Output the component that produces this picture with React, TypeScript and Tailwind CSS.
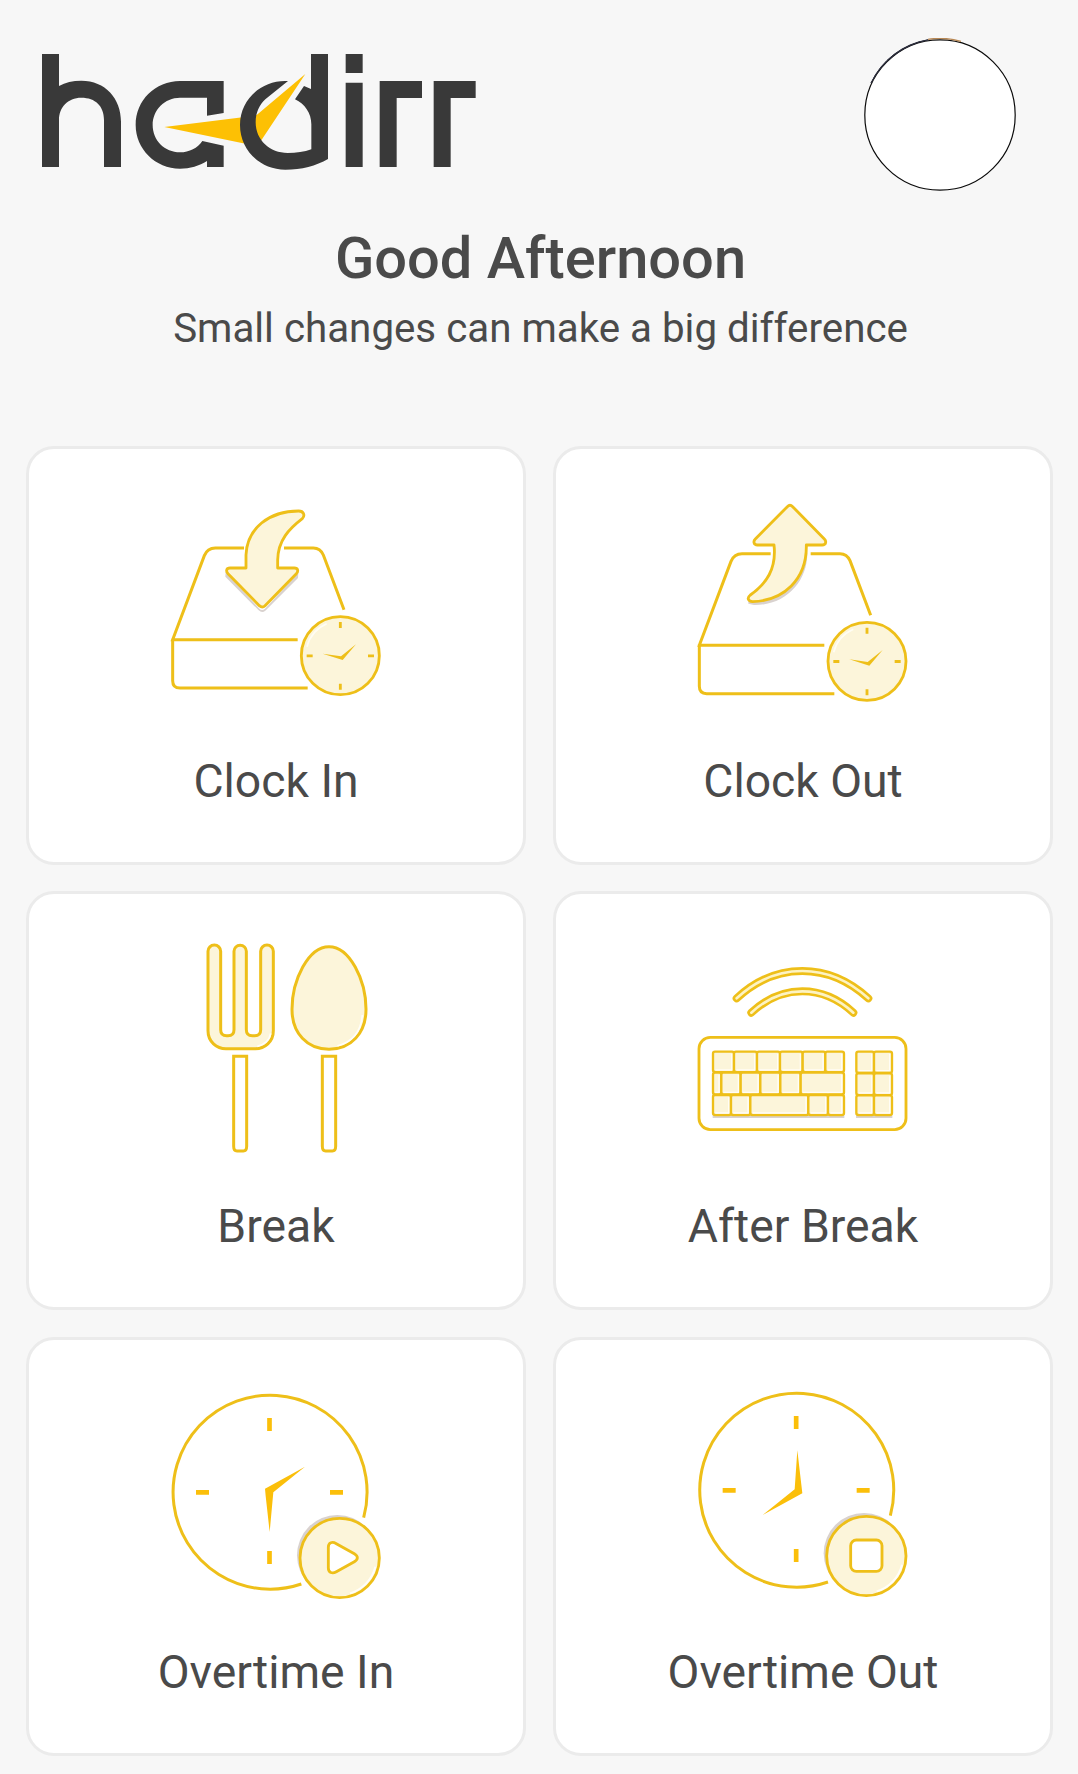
import type { ReactNode } from 'react'

const GOLD = '#eebf19'
const AMBER = '#fbbf0a'
const CREAM = '#fcf5da'
const SHADE = '#d9d2cf'

function Logo() {
  return (
    <svg className="h-40 w-[480px]" viewBox="0 0 1440 480" role="img" aria-label="hadirr">
      {/* h */}
      <path d="M66 72H117V168C136 157 158 152 184 152C256 152 303 205 303 275V411H252V270C252 228 226 203 184 203C143 203 117 232 117 270V411H66Z" fill="#393939" />
      {/* a */}
      <path d="M611 153V249L561 257V203H480C434 203 398 240 398 285C398 331 434 367 480 367C508 367 533 354 547 333L611 347V411H561V393C538 408 510 416 480 416C406 416 347 357 347 285C347 211 406 153 480 153Z" fill="#393939" />
      {/* clock hands */}
      <path d="M433 291L668 262L710 255L856 132L722 334L680 342Z" fill="#fdc004" />
      {/* d */}
      <path d="M804 153C728 148 660 206 660 285C660 360 720 419 796 419C845 419 888 408 924 387V72H873V177L852 168L825 208C855 222 874 250 874 283V358C853 366 829 369 803 369C750 369 707 331 707 277C707 249 717 226 736 208Z" fill="#393939" />
      {/* i, r, r */}
      <path d="M977 72H1028V129H977ZM977 158H1028V411H977ZM1079 153H1206V204H1130V411H1079ZM1241 153H1367V204H1292V411H1241Z" fill="#393939" />
    </svg>
  )
}

function Avatar() {
  return (
    <svg className="size-[154px]" viewBox="0 0 154 154" role="img" aria-label="Profile">
      <circle cx="77" cy="77" r="75.2" fill="#fff" stroke="#0a0a0a" strokeWidth="1.2" />
      <path d="M8 45A76 76 0 0 1 65 1.800A82 82 0 0 0 8 45Z" fill="#1b1c2b" stroke="#2b2d3c" strokeWidth="1" />
      <path d="M65 1.300A76 76 0 0 1 98 3.300" fill="none" stroke="#b98956" strokeWidth="1.200" />
    </svg>
  )
}

function SmallClock() {
  return (
    <>
      <circle cx="571" cy="497" r="117" fill={CREAM} stroke={GOLD} strokeWidth="8.500" />
      <path d="M471 470A104 104 0 0 1 530 401" fill="none" stroke="#fffdf4" strokeWidth="5" />
      <path d="M571 396V414M571 581V599M470 497.500H488M654 497.500H672" stroke={GOLD} strokeWidth="8.500" />
      <path d="M518 491L573 499L618 463L578 510Z" fill={GOLD} />
    </>
  )
}

function TrayLines() {
  return (
    <path d="M282 174H196Q172 174 163 197L68 449H443M68 446V572Q68 594 90 594H473M402 174H490Q511 174 520 195L582 359" fill="none" stroke={GOLD} strokeWidth="9" />
  )
}

function ClockInIcon() {
  return (
    <svg className="size-[250px]" viewBox="3 -45 750 750" aria-hidden>
      <TrayLines />
      <path d="M227 246L328 356Q336 364 345 356L445 249L444 264L346 362Q336 370 326 361L226 260Z" fill={SHADE} />
      <path d="M288 234V195C291 115 357 63 446 63C461 63 466 76 457 86C418 116 384 150 383 210V234H433C444 234 446 243 439 251L345 347Q337 355 328 347L234 251C227 243 229 234 240 234Z" fill={CREAM} stroke={GOLD} strokeWidth="8.500" strokeLinejoin="round" />
      <SmallClock />
    </svg>
  )
}

function ClockOutIcon() {
  return (
    <svg className="size-[250px]" viewBox="-6 -45 750 750" aria-hidden>
      <g transform="translate(-10 17)">
        <TrayLines />
        <SmallClock />
      </g>
      <path d="M382 190C382 276 316 347 222 345L205 341V326L230 335C310 332 377 270 380 190Z" fill={SHADE} />
      <path d="M282 165C290 237 259 281 211 315C200 324 204 334 218 335C310 332 381 269 379 165H427C438 165 440 154 433 147L338 50Q330 42 322 50L226 147C219 154 221 165 232 165Z" fill={CREAM} stroke={GOLD} strokeWidth="8.500" strokeLinejoin="round" />
    </svg>
  )
}

function BreakIcon() {
  return (
    <svg className="size-[250px]" viewBox="-87 0 750 750" aria-hidden>
      <g stroke={GOLD} strokeWidth="9">
        <path d="M84 94A19 19 0 0 1 122 94V329Q122 347 140 347H144Q162 347 162 329V94A18.500 18.500 0 0 1 199 94V329Q199 347 217 347H224Q242 347 242 329V94A19 19 0 0 1 280 94V332C280 365 254 386 226 386H138C110 386 84 365 84 332Z" fill={CREAM} />
        <path d="M447 80C385 80 336 180 336 268C336 340 382 388 447 388C512 388 558 340 558 268C558 180 509 80 447 80Z" fill={CREAM} />
        <path d="M161 409H200V679Q200 693 190 693H171Q161 693 161 679ZM427 409H467V679Q467 693 457 693H437Q427 693 427 679Z" fill="#fff" />
      </g>
      <path d="M272 340C269 360 252 375 232 379M547 285C543 336 516 366 472 378" fill="none" stroke="#fffefa" strokeWidth="5" />
    </svg>
  )
}

// x, y, width, height of each key
const KEYS = [
  [99, 335, 63, 61], [162, 335, 69, 61], [231, 335, 69, 61], [300, 335, 68, 61], [368, 335, 68, 61], [436, 335, 56, 61],
  [99, 398, 25, 65], [124, 398, 58, 65], [182, 398, 59, 65], [241, 398, 60, 65], [301, 398, 61, 65], [362, 398, 130, 65],
  [99, 465, 54, 60], [153, 465, 58, 60], [211, 465, 174, 60], [385, 465, 59, 60], [444, 465, 48, 60],
  [529, 335, 53, 63], [582, 335, 54, 63], [529, 400, 53, 65], [582, 400, 54, 65], [529, 466, 53, 59], [582, 466, 54, 59],
]

function AfterBreakIcon() {
  return (
    <svg className="size-[250px]" viewBox="-6 -60 750 750" aria-hidden>
      <g fill="none" strokeLinecap="round">
        <path d="M170 175Q258 93 367 93Q475 93 565 175M214 218Q283 154 367 154Q451 154 520 218" stroke={GOLD} strokeWidth="24" />
        <path d="M170 175Q258 93 367 93Q475 93 565 175M214 218Q283 154 367 154Q451 154 520 218" stroke="#fdf3c2" strokeWidth="8" />
      </g>
      <rect x="57" y="292" width="621" height="277" rx="34" fill="#fff" stroke={GOLD} strokeWidth="8.500" />
      <path d="M98 530H493M528 530H637" stroke={SHADE} strokeWidth="8" />
      {KEYS.map(([x, y, w, h]) => (
        <g key={`${x}-${y}`}>
          <rect x={x} y={y} width={w} height={h} rx="6" fill={CREAM} stroke={GOLD} strokeWidth="7" />
          <path d={`M${x + w - 7} ${y + 7}V${y + h - 6}H${x + 7}`} fill="none" stroke="#fffdf6" strokeWidth="4" />
        </g>
      ))}
    </svg>
  )
}

function ClockFace() {
  return (
    <>
      <path d="M641 443A291 291 0 1 0 454 642" fill="none" stroke={GOLD} strokeWidth="9" />
      <path d="M358.500 144V183M358.500 543V582M138 367H177M540 367H579" stroke={AMBER} strokeWidth="14" />
    </>
  )
}

function OvertimeBadge({ children }: { children: ReactNode }) {
  return (
    <>
      <circle cx="562" cy="556" r="121" fill={SHADE} />
      <circle cx="569" cy="564" r="119" fill={CREAM} stroke={GOLD} strokeWidth="8.500" />
      <path d="M676 590A111 111 0 0 1 600 670" fill="none" stroke="#fffefa" strokeWidth="6" />
      {children}
    </>
  )
}

function OvertimeInIcon() {
  return (
    <svg className="size-[250px]" viewBox="3 -12 750 750" aria-hidden>
      <ClockFace />
      <path d="M345 356L465 290L370 367L359 486L347 378Z" fill={AMBER} />
      <OvertimeBadge>
        <path d="M535 532C535 517 547 514 559 521L613 551C625 558 625 568 613 575L559 605C547 612 535 608 535 594Z" fill="#fff" stroke={GOLD} strokeWidth="8.500" />
      </OvertimeBadge>
    </svg>
  )
}

function OvertimeOutIcon() {
  return (
    <svg className="size-[250px]" viewBox="-6 -12 750 750" aria-hidden>
      <g transform="translate(-10 -6)">
        <ClockFace />
        <OvertimeBadge>
          <rect x="522" y="516" width="94" height="94" rx="17" fill="#fff" stroke={GOLD} strokeWidth="8.500" />
        </OvertimeBadge>
      </g>
      <path d="M352 241L367 370L248 435L344 358Z" fill={AMBER} />
    </svg>
  )
}

const ACTIONS = [
  { label: 'Clock In', icon: <ClockInIcon /> },
  { label: 'Clock Out', icon: <ClockOutIcon /> },
  { label: 'Break', icon: <BreakIcon /> },
  { label: 'After Break', icon: <AfterBreakIcon /> },
  { label: 'Overtime In', icon: <OvertimeInIcon /> },
  { label: 'Overtime Out', icon: <OvertimeOutIcon /> },
]

export default function App() {
  return (
    <div className="h-[1774px] w-[1078px] overflow-hidden bg-[#f7f7f7] font-['Roboto',sans-serif] text-[#4a4a4a]">
      <header className="flex h-[222px] items-start justify-between pl-5 pr-[61px]">
        <div className="pt-[30px]">
          <Logo />
        </div>
        <div className="pt-[38px]">
          <Avatar />
        </div>
      </header>

      <section className="h-[223.6px] pl-[3px] text-center">
        <h1 className="pt-px text-[57.8px] font-medium leading-[70px]">Good Afternoon</h1>
        <p className="pt-3 text-[40.3px] leading-[48px]">Small changes can make a big difference</p>
      </section>

      <main className="grid grid-cols-[500px_500px] gap-x-[27px] gap-y-[26.5px] pl-[26px]">
        {ACTIONS.map(({ label, icon }) => (
          <button
            key={label}
            type="button"
            className="flex h-[419px] flex-col items-center rounded-[28px] border-[3px] border-[#ebebeb] bg-white pt-[26px]"
          >
            {icon}
            <span className="mt-[29px] text-[46.3px] leading-[54px]">{label}</span>
          </button>
        ))}
      </main>
    </div>
  )
}
